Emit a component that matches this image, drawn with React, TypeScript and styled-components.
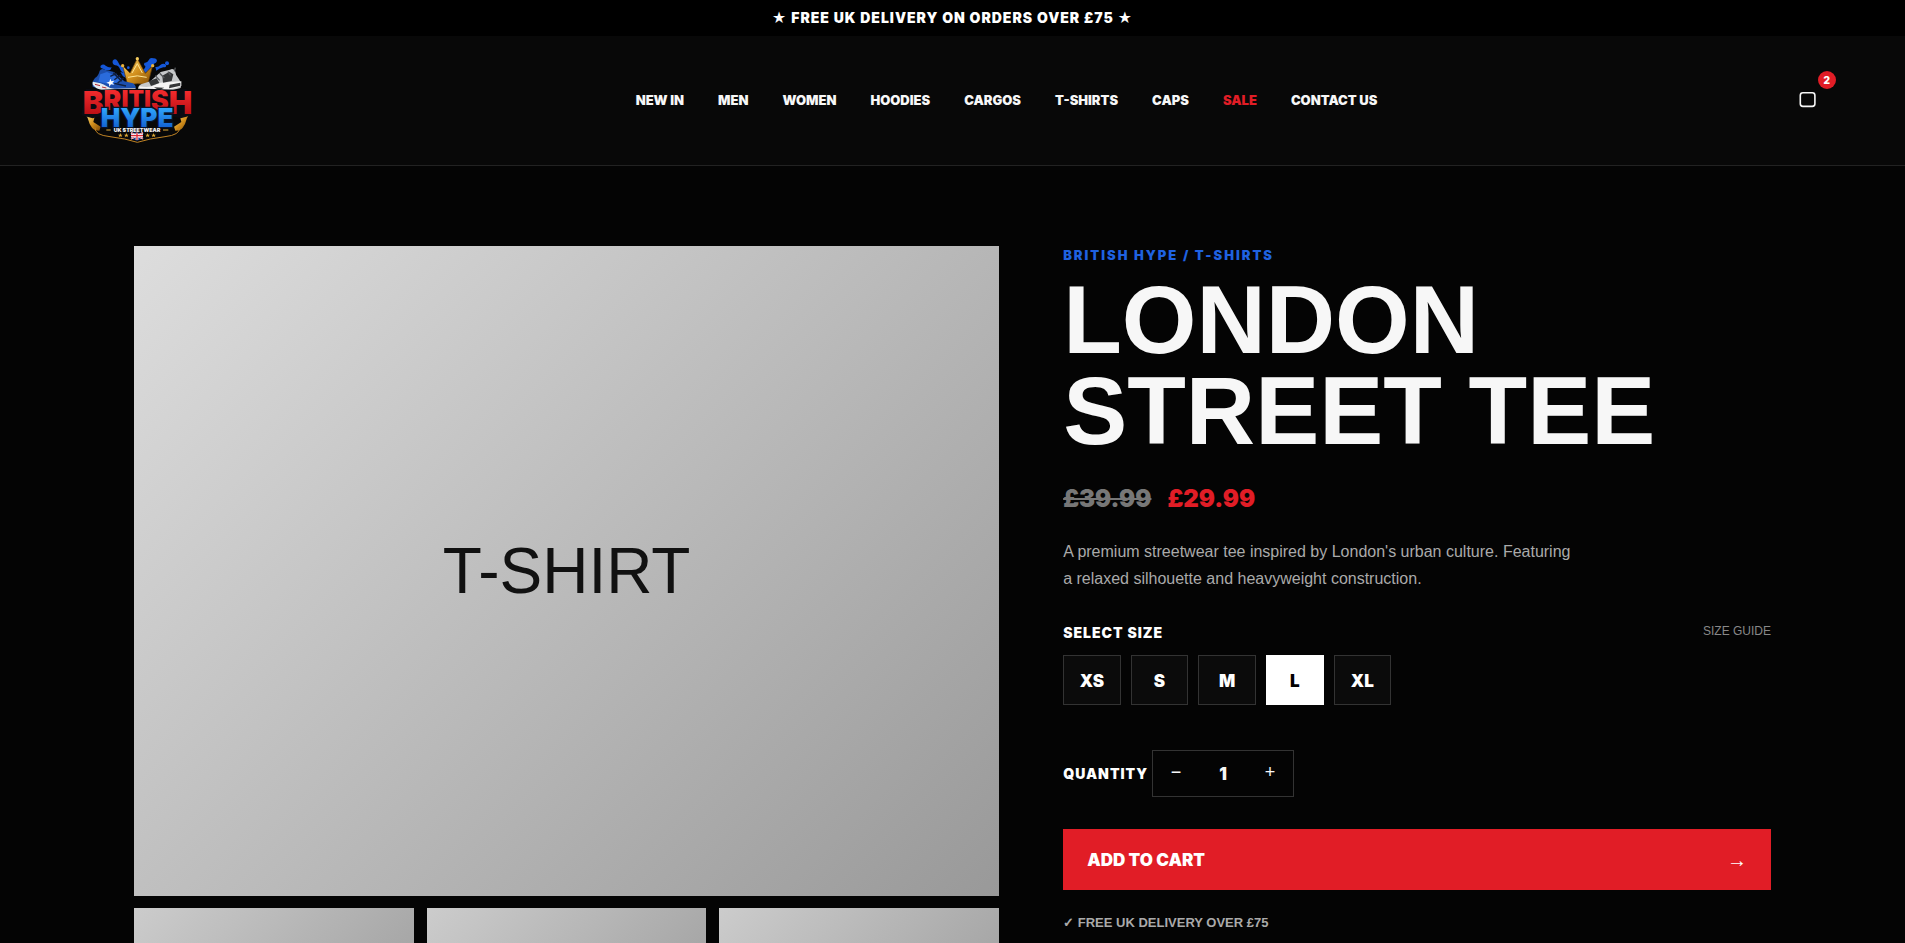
import React, { useState } from "react";
import styled, { createGlobalStyle } from "styled-components";

const body = `Arial, "Liberation Sans", sans-serif`;
const heavy = `Inter, "Liberation Sans", sans-serif`;
const red = "#e11d26";

const GlobalStyle = createGlobalStyle`
  *, *::before, *::after { box-sizing: border-box; }
  body { margin: 0; background: #040404; color: #f7f7f7; font-family: ${body}; }
  button, input { font: inherit; color: inherit; }
  a { color: inherit; text-decoration: none; }
`;

const Announcement = styled.p`
  margin: 0;
  background: #000;
  color: #fff;
  text-align: center;
  font: 900 14px/36px ${heavy};
  letter-spacing: 1px;
`;

const Header = styled.header`
  display: flex;
  align-items: center;
  justify-content: space-between;
  min-height: 130px;
  padding: 0 4% 2px;
  background: #080808;
  border-bottom: 1px solid #222;
`;

const Brand = styled.a`
  display: block;
  width: 150px;
  height: 110px;
`;

const Nav = styled.nav`
  display: flex;
  gap: 34px;
`;

const NavLink = styled.a<{ $sale?: boolean }>`
  font: 900 13px/18px ${heavy};
  color: ${(p) => (p.$sale ? red : "#f7f7f7")};
`;

const CartButton = styled.button`
  position: relative;
  width: 42px;
  height: 42px;
  padding: 0;
  border: 0;
  background: none;
  display: grid;
  place-items: center;
  cursor: pointer;
`;

const Badge = styled.span`
  position: absolute;
  top: -8px;
  right: -7px;
  width: 18px;
  height: 18px;
  border-radius: 50%;
  background: ${red};
  color: #fff;
  font: 900 10px/18px ${heavy};
  text-align: center;
`;

const Product = styled.main`
  display: grid;
  grid-template-columns: 11fr 9fr;
  gap: 64px;
  padding: 80px 134px;
  align-items: start;
`;

const Gallery = styled.section`
  display: grid;
  grid-template-columns: repeat(3, 1fr);
  gap: 12px 13px;
`;

const MainImage = styled.div`
  grid-column: 1 / -1;
  height: 650px;
  display: grid;
  place-items: center;
  background: linear-gradient(135deg, #ddd, #999);
  color: #111;
  font-size: 64px;
`;

const Thumb = styled.button`
  height: 150px;
  border: 0;
  background: linear-gradient(135deg, #ccc, #999);
  cursor: pointer;
`;

const Crumbs = styled.p`
  margin: 0 0 10px;
  color: #1f62e0;
  font: 900 13px/18px ${heavy};
  letter-spacing: 2px;
`;

const Title = styled.h1`
  margin: 0;
  font: bold 96px/91px ${body};
`;

const Prices = styled.p`
  margin: 26px 0 22px;
  display: flex;
  gap: 16px;
  font: 900 24px/34px ${heavy};
`;

const OldPrice = styled.del`
  color: #777;
`;

const Price = styled.span`
  color: ${red};
`;

const Description = styled.p`
  margin: 0;
  max-width: 520px;
  color: #aaa;
  font-size: 16px;
  line-height: 27px;
`;

const SizeHead = styled.div`
  display: flex;
  justify-content: space-between;
  align-items: flex-start;
  margin: 31px 0 12px;
`;

const Label = styled.span`
  color: #fff;
  font: 900 14px/20px ${heavy};
  letter-spacing: 1px;
`;

const GuideLink = styled.a`
  color: #888;
  font-size: 12px;
  line-height: 16px;
`;

const Sizes = styled.div`
  display: grid;
  grid-template-columns: repeat(5, 1fr);
  gap: 10px;
  width: 328px;
`;

const SizeButton = styled.button<{ $active: boolean }>`
  height: 50px;
  padding: 2px 0 0;
  border: 1px solid ${(p) => (p.$active ? "#fff" : "#333")};
  background: ${(p) => (p.$active ? "#fff" : "#0b0b0b")};
  color: ${(p) => (p.$active ? "#000" : "#fff")};
  font: 900 17px/20px ${heavy};
  cursor: pointer;
`;

const QuantityRow = styled.div`
  display: flex;
  align-items: center;
  gap: 4px;
  margin: 45px 0 32px;
`;

const Stepper = styled.div`
  display: grid;
  grid-template-columns: 46px 48px 46px;
  height: 47px;
  border: 1px solid #333;
`;

const StepButton = styled.button`
  padding: 0 0 2px;
  border: 0;
  background: none;
  font-size: 18px;
  cursor: pointer;
`;

const QuantityInput = styled.input`
  width: 100%;
  padding: 0;
  border: 0;
  background: none;
  text-align: center;
  font: 900 17px/20px ${heavy};
`;

const AddButton = styled.button`
  display: flex;
  align-items: center;
  justify-content: space-between;
  width: 100%;
  height: 61px;
  padding: 0 24px;
  border: 0;
  background: ${red};
  color: #fff;
  font: 900 17px/20px ${heavy};
  cursor: pointer;
`;

const Arrow = styled.span`
  font: 20px/20px "Liberation Sans", sans-serif;
`;

const Perks = styled.ul`
  margin: 23px 0 0;
  padding: 0;
  list-style: none;
  color: #aaa;
  font: bold 13px/20px ${body};
`;

const Logo = () => (
  <svg width="120" height="110" viewBox="48 15 360 330" role="img" aria-label="British Hype UK Streetwear">
    <defs>
      <linearGradient id="red" x1="0" y1="0" x2="0" y2="1">
        <stop offset="0.2" stopColor="#f02a2c" />
        <stop offset="1" stopColor="#a8060d" />
      </linearGradient>
      <linearGradient id="blue" x1="0" y1="0" x2="0" y2="1">
        <stop offset="0.2" stopColor="#2fa4fb" />
        <stop offset="1" stopColor="#0a4dc4" />
      </linearGradient>
      <linearGradient id="gold" x1="0" y1="0" x2="1" y2="1">
        <stop offset="0" stopColor="#f8d774" />
        <stop offset="0.5" stopColor="#d28f1c" />
        <stop offset="1" stopColor="#7d4a08" />
      </linearGradient>
    </defs>
    <g fill="#1557d8">
      <path d="M158 62q9-9 15 2 4 12 14 16 10 5 10 20-13-1-17-13-4-10-14-11-10-3-8-14z" />
      <path d="M122 77q8-7 15 0 9 7 18 5l-4 8q-14 3-22-4-10-2-7-9z" />
      <path d="M254 68q8 1 12-7 4-10 14-6 10-1 11 8-2 7-9 8-2 9-10 12-8 11-20 19l-6-10q11-7 10-14-7-4-2-10z" />
      <path d="M286 81q10 1 15-6 10-8 17 0 2 8-8 7-12 2-21 10z" />
      <circle cx="321" cy="70" r="6" />
      <circle cx="205" cy="83" r="4" />
      <path d="M181 96l14 4 10 18-16-9z" />
    </g>
    <path d="M188 77l22 22 16-32 6-12 6 12 18 33 22-23-15 58q-30-8-60 0z" fill="url(#gold)" stroke="#5b3505" strokeWidth="2" />
    <path d="M204 112q28-9 56 0M216 99l16-28 15 28" fill="none" stroke="#ffe694" strokeWidth="3" />
    <circle cx="188" cy="77" r="5" fill="#edb43c" />
    <circle cx="232" cy="56" r="5" fill="#f5cc5e" />
    <circle cx="278" cy="77" r="5" fill="#edb43c" />
    <path d="M119 92q6-8 15-3l28 7 31 28 26 6q12 8 7 19-45 8-90 3l-38-12q-3-15 7-26 11-7 14-22z" fill="#1c4fae" />
    <path d="M121 103l20-7 20 9 21 16-24 13-43-9z" fill="#2a6bdc" />
    <path d="M98 125q26 3 41 13 14 10 30 8l58-2-3 8q-53 6-91 0-29-5-35-19z" fill="#e5e9ed" />
    <path d="M105 133l15 4m6 4l13 3m45 5h25" stroke="#bb2b35" strokeWidth="3" />
    <path d="M160 98l25 26m-34-15l19-9m-7 19l18-13m-8 23l18-15m7 24l-35-8" stroke="#101e3c" strokeWidth="4" />
    <path d="M151 116l3 8 9-2-6 7 6 5-10-1-5 7-1-9-8-3 9-3z" fill="#fff" />
    <path d="M345 92q-6-8-15-3l-28 7-31 28-28 9q-12 7-8 19 45 9 89 2l38-10q3-17-7-29-8-9-10-23z" fill="#c6c8ca" />
    <path d="M238 139q30 5 46-3 14-10 34-9l46-3v14q-32 14-74 14-42 1-52-4z" fill="#f4f4f4" />
    <path d="M266 124l24-9 8 14-25 9zM307 107l21-12 12 8-5 20-26 5zM329 134l32-6v9l-34 8zM282 142l31 1-16 8z" fill="#343638" />
    <path d="M343 94l3-11m-47 17l14 14m-27-7l13 14m25-26l8 11" stroke="#55585b" strokeWidth="4" />
    <path d="M78 226l26 4-4 16 22 14-4 12q-16 0-22-9-8-9-10-20-2-9-8-17z" fill="url(#gold)" />
    <path d="M386 226l-26 4 4 16-22 14 4 12q16 0 22-9 8-9 10-20 2-9 8-17z" fill="url(#gold)" />
    <path d="M105 263q-2 22 45 27l44 7 38 10 39-10 44-7q45-5 44-27" fill="none" stroke="#c08325" strokeWidth="3" />
    <path d="M64 226l14-80 40 3q110-6 225 0l37-3 16 80-34 9-90-18H168l-70 18z" fill="#090b12" />
    <text y="222" x="68" fontSize="94" fill="url(#red)" fontFamily="Inter" fontWeight="900">
      B<tspan fontSize="80" dy="-12">R</tspan><tspan fontSize="72" dy="-7">I</tspan><tspan fontSize="68" dy="-2">T</tspan><tspan fontSize="72" dy="2">I</tspan><tspan fontSize="80" dy="7">S</tspan><tspan fontSize="94" dy="12">H</tspan>
    </text>
    <text x="231" y="262" textAnchor="middle" fontFamily="Inter" fontWeight="900" fontSize="78" fill="url(#blue)" stroke="#06122a" strokeWidth="8" paintOrder="stroke">HYPE</text>
    <text x="231" y="276" textAnchor="middle" fontFamily="Inter" fontWeight="900" fontSize="16" fill="#f3f3f3">UK STREETWEAR</text>
    <path d="M139 270h13m157 0h16" stroke="#e3ab36" strokeWidth="3" />
    <path
      d="M181 279l2 5h5l-4 3 2 5-5-3-5 3 2-5-4-3h5zM199 279l2 5h5l-4 3 2 5-5-3-5 3 2-5-4-3h5zM263 279l2 5h5l-4 3 2 5-5-3-5 3 2-5-4-3h5zM281 279l2 5h5l-4 3 2 5-5-3-5 3 2-5-4-3h5z"
      fill="#e3ab36"
    />
    <path d="M213 278h36v17l-18 7-18-7z" fill="#173c8f" />
    <path d="M213 278l36 18m0-18l-36 18" stroke="#fff" strokeWidth="5" />
    <path d="M213 278l36 18m0-18l-36 18" stroke="#dc2735" strokeWidth="2" />
    <path d="M231 278v22m-18-13h36" stroke="#fff" strokeWidth="8" />
    <path d="M231 278v22m-18-13h36" stroke="#dc2735" strokeWidth="4" />
  </svg>
);

const BagIcon = () => (
  <svg width="18" height="18" viewBox="0 0 18 18" fill="none" stroke="#f7f7f7" strokeWidth="1.6" aria-hidden="true">
    <rect x="1.3" y="1.8" width="14.6" height="13.6" rx="2.6" />
  </svg>
);

const links = ["NEW IN", "MEN", "WOMEN", "HOODIES", "CARGOS", "T-SHIRTS", "CAPS", "SALE", "CONTACT US"];
const sizes = ["XS", "S", "M", "L", "XL"];

export default function App() {
  const [size, setSize] = useState("L");
  const [quantity, setQuantity] = useState(1);

  return (
    <>
      <GlobalStyle />
      <Announcement>★ FREE UK DELIVERY ON ORDERS OVER £75 ★</Announcement>
      <Header>
        <Brand href="#"><Logo /></Brand>
        <Nav>
          {links.map((link) => (
            <NavLink key={link} href="#" $sale={link === "SALE"}>{link}</NavLink>
          ))}
        </Nav>
        <CartButton aria-label="Cart">
          <BagIcon />
          <Badge>2</Badge>
        </CartButton>
      </Header>
      <Product>
        <Gallery>
          <MainImage>T-SHIRT</MainImage>
          <Thumb aria-label="View 1" />
          <Thumb aria-label="View 2" />
          <Thumb aria-label="View 3" />
        </Gallery>
        <section>
          <Crumbs>BRITISH HYPE / T-SHIRTS</Crumbs>
          <Title>LONDON<br />STREET TEE</Title>
          <Prices>
            <OldPrice>£39.99</OldPrice>
            <Price>£29.99</Price>
          </Prices>
          <Description>
            A premium streetwear tee inspired by London's urban culture. Featuring a relaxed silhouette and heavyweight construction.
          </Description>
          <SizeHead>
            <Label id="size-label">SELECT SIZE</Label>
            <GuideLink href="#">SIZE GUIDE</GuideLink>
          </SizeHead>
          <Sizes role="group" aria-labelledby="size-label">
            {sizes.map((s) => (
              <SizeButton key={s} $active={s === size} aria-pressed={s === size} onClick={() => setSize(s)}>{s}</SizeButton>
            ))}
          </Sizes>
          <QuantityRow>
            <Label as="label" htmlFor="quantity">QUANTITY</Label>
            <Stepper>
              <StepButton aria-label="Decrease" onClick={() => setQuantity(Math.max(1, quantity - 1))}>−</StepButton>
              <QuantityInput id="quantity" inputMode="numeric" value={quantity} onChange={(e) => setQuantity(Number(e.target.value) || 1)} />
              <StepButton aria-label="Increase" onClick={() => setQuantity(quantity + 1)}>+</StepButton>
            </Stepper>
          </QuantityRow>
          <AddButton>
            <span>ADD TO CART</span>
            <Arrow aria-hidden="true">→</Arrow>
          </AddButton>
          <Perks>
            <li>✓ FREE UK DELIVERY OVER £75</li>
          </Perks>
        </section>
      </Product>
    </>
  );
}
